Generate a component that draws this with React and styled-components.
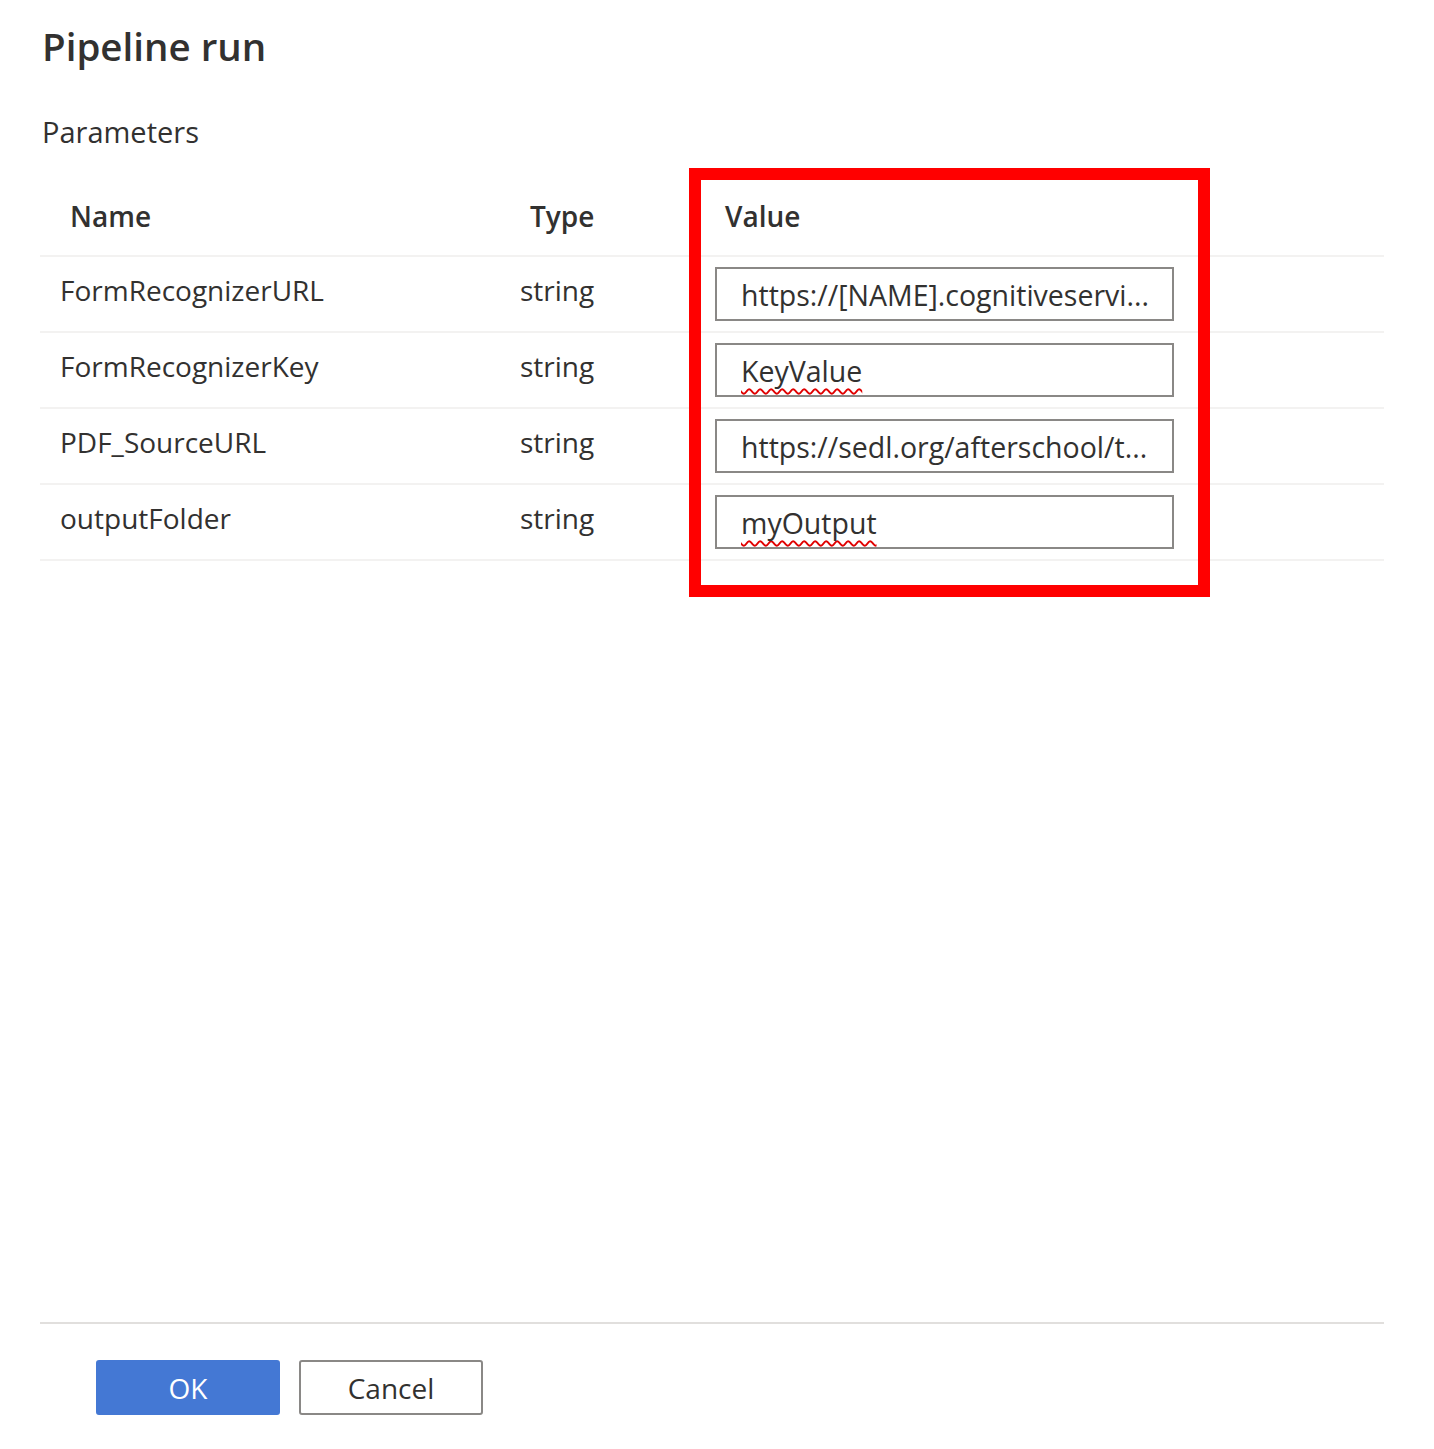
import React from "react";
import styled, { createGlobalStyle } from "styled-components";

const Global = createGlobalStyle`
  html, body { margin: 0; padding: 0; background: #ffffff; }
  body { font-family: "Open Sans", "Noto Sans", "Liberation Sans", sans-serif; color: #323130; }
`;

const Page = styled.div`
  width: 1434px;
  height: 1449px;
  box-sizing: border-box;
  padding: 0 50px 0 40px;
  display: flex;
  flex-direction: column;
`;

const Title = styled.h1`
  margin: 18px 0 0 2px;
  font-size: 38.5px;
  font-weight: 600;
  line-height: 56px;
  color: #323130;
`;

const Section = styled.h2`
  margin: 38px 0 0 2px;
  font-size: 29px;
  font-weight: 400;
  line-height: 40px;
  color: #323130;
`;

const TableWrap = styled.div`
  position: relative;
  margin-top: 29px;
`;

const Row = styled.div`
  display: grid;
  grid-template-columns: 460px 195px 1fr;
  height: 76px;
  align-items: center;
  border-bottom: 2px solid #f3f2f1;
  box-sizing: border-box;
`;

const HeadCell = styled.div`
  padding-left: 30px;
  font-size: 28px;
  font-weight: 600;
  color: #323130;
  transform: translateY(-2px);
`;

const Cell = styled.div`
  padding-left: 20px;
  font-size: 28px;
  color: #323130;
  transform: translateY(-4px);
`;

const InputCell = styled.div`
  padding-left: 20px;
`;

const Input = styled.div`
  width: 459px;
  height: 54px;
  box-sizing: border-box;
  border: 2px solid #8a8886;
  padding: 2px 24px 0;
  display: flex;
  align-items: center;
  font-size: 28.5px;
  color: #323130;
  white-space: nowrap;
  overflow: hidden;
`;

const Spelled = styled.span`
  text-decoration-line: underline;
  text-decoration-style: wavy;
  text-decoration-color: #e00000;
  text-decoration-thickness: 2px;
  text-decoration-skip-ink: none;
  text-underline-offset: 6px;
`;

const Highlight = styled.div`
  position: absolute;
  left: 649px;
  top: -13px;
  width: 521px;
  height: 429px;
  box-sizing: border-box;
  border: 12px solid #ff0000;
  pointer-events: none;
`;

const Spacer = styled.div`
  flex: 1;
`;

const Footer = styled.div`
  border-top: 2px solid #e1dfdd;
  padding: 36px 0 0 56px;
  height: 127px;
  box-sizing: border-box;
  display: flex;
  gap: 19px;
`;

const Button = styled.button`
  width: 184px;
  height: 55px;
  box-sizing: border-box;
  border-radius: 3px;
  font-family: inherit;
  font-size: 28px;
  display: flex;
  align-items: center;
  justify-content: center;
  padding: 0;
  border: 2px solid ${(p) => (p.$primary ? "#4478d4" : "#8a8886")};
  background: ${(p) => (p.$primary ? "#4478d4" : "#ffffff")};
  color: ${(p) => (p.$primary ? "#ffffff" : "#323130")};
`;

const params = [
  { name: "FormRecognizerURL", type: "string", value: "https://[NAME].cognitiveservi...", spell: false },
  { name: "FormRecognizerKey", type: "string", value: "KeyValue", spell: true },
  { name: "PDF_SourceURL", type: "string", value: "https://sedl.org/afterschool/t...", spell: false },
  { name: "outputFolder", type: "string", value: "myOutput", spell: true },
];

export default function App() {
  return (
    <>
      <Global />
      <Page>
        <Title>Pipeline run</Title>
        <Section>Parameters</Section>
        <TableWrap>
          <Row>
            <HeadCell>Name</HeadCell>
            <HeadCell>Type</HeadCell>
            <HeadCell>Value</HeadCell>
          </Row>
          {params.map((p) => (
            <Row key={p.name}>
              <Cell>{p.name}</Cell>
              <Cell>{p.type}</Cell>
              <InputCell>
                <Input>{p.spell ? <Spelled>{p.value}</Spelled> : p.value}</Input>
              </InputCell>
            </Row>
          ))}
          <Highlight />
        </TableWrap>
        <Spacer />
        <Footer>
          <Button $primary>OK</Button>
          <Button>Cancel</Button>
        </Footer>
      </Page>
    </>
  );
}
